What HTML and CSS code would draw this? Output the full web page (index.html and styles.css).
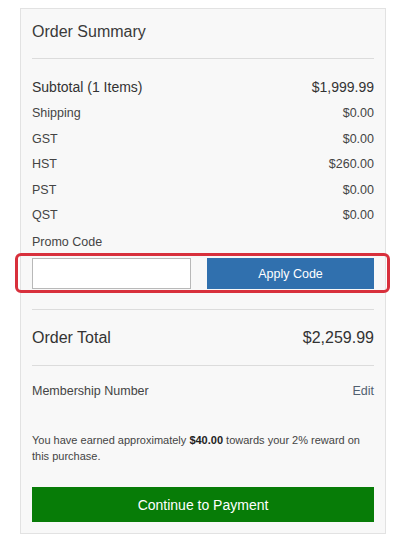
FILE: index.html
```html
<!DOCTYPE html>
<html lang="en">
<head>
<meta charset="utf-8">
<title>Order Summary</title>
<link rel="stylesheet" href="styles.css">
</head>
<body>
<section class="card">
  <h2 class="title">Order Summary</h2>
  <hr class="rule">
  <div class="rows">
    <div class="row row-main"><span>Subtotal (1 Items)</span><span>$1,999.99</span></div>
    <div class="row"><span>Shipping</span><span>$0.00</span></div>
    <div class="row"><span>GST</span><span>$0.00</span></div>
    <div class="row"><span>HST</span><span>$260.00</span></div>
    <div class="row"><span>PST</span><span>$0.00</span></div>
    <div class="row"><span>QST</span><span>$0.00</span></div>
    <div class="row"><span>Promo Code</span></div>
  </div>
  <div class="promo">
    <input class="promo-input" type="text" aria-label="Promo Code">
    <button class="apply" type="button">Apply Code</button>
    <div class="highlight"></div>
  </div>
  <hr class="rule rule-total">
  <div class="total"><span>Order Total</span><span>$2,259.99</span></div>
  <hr class="rule">
  <div class="member"><span>Membership Number</span><a class="edit" href="#">Edit</a></div>
  <p class="reward">You have earned approximately <strong>$40.00</strong> towards your 2% reward on this purchase.</p>
  <button class="pay" type="button">Continue to Payment</button>
</section>
</body>
</html>
```

FILE: styles.css
```css
html, body {
  margin: 0;
  padding: 0;
  background: #ffffff;
}

body {
  font-family: "Liberation Sans", Arial, sans-serif;
  color: #333333;
  padding: 8px 0 0 20px;
}

.card {
  width: 342px;
  background: #f8f8f8;
  border: 1px solid #e2e2e2;
  padding: 13px 11px 11px 11px;
}

.title {
  margin: 0;
  font-size: 16px;
  font-weight: normal;
  line-height: 20px;
  color: #3a3a3a;
}

.rule {
  border: 0;
  border-top: 1px solid #dcdcdc;
  margin: 16px 0 0 0;
  height: 0;
}

.rows {
  margin-top: 13.5px;
}

.row {
  display: flex;
  justify-content: space-between;
  align-items: center;
  height: 25.5px;
  font-size: 12.5px;
  color: #444444;
}

.row-main {
  height: 28px;
  font-size: 14px;
  color: #333333;
}

.row:last-child {
  height: 27px;
}

.promo {
  position: relative;
  display: flex;
  gap: 16px;
  margin-top: 3px;
  height: 31px;
}

.promo-input {
  width: 159px;
  box-sizing: border-box;
  height: 31px;
  margin: 0;
  border: 1px solid #b8b8b8;
  background: #ffffff;
  padding: 0 6px;
  font-family: inherit;
}

.apply {
  flex: 1;
  height: 31px;
  margin: 0;
  border: 0;
  background: #3070ae;
  color: #ffffff;
  font-family: inherit;
  font-size: 12.5px;
  padding: 0;
}

.highlight {
  position: absolute;
  left: -17px;
  right: -16px;
  top: -5px;
  bottom: -4px;
  border: 3px solid #d8303c;
  border-radius: 6px;
  pointer-events: none;
}

.rule-total {
  margin-top: 20px;
}

.total {
  display: flex;
  justify-content: space-between;
  align-items: center;
  margin-top: 17px;
  height: 22px;
  font-size: 16px;
  color: #333333;
}

.member {
  display: flex;
  justify-content: space-between;
  align-items: center;
  margin-top: 16px;
  height: 18px;
  font-size: 12.5px;
  color: #444444;
}

.edit {
  color: #506070;
  text-decoration: none;
}

.reward {
  margin: 32px 0 0 0;
  font-size: 11px;
  line-height: 16px;
  color: #444444;
}

.reward strong {
  color: #222222;
}

.pay {
  display: block;
  width: 100%;
  height: 35px;
  margin: 23px 0 0 0;
  border: 0;
  background: #077c07;
  color: #ffffff;
  font-family: inherit;
  font-size: 14px;
  padding: 0;
}
```
